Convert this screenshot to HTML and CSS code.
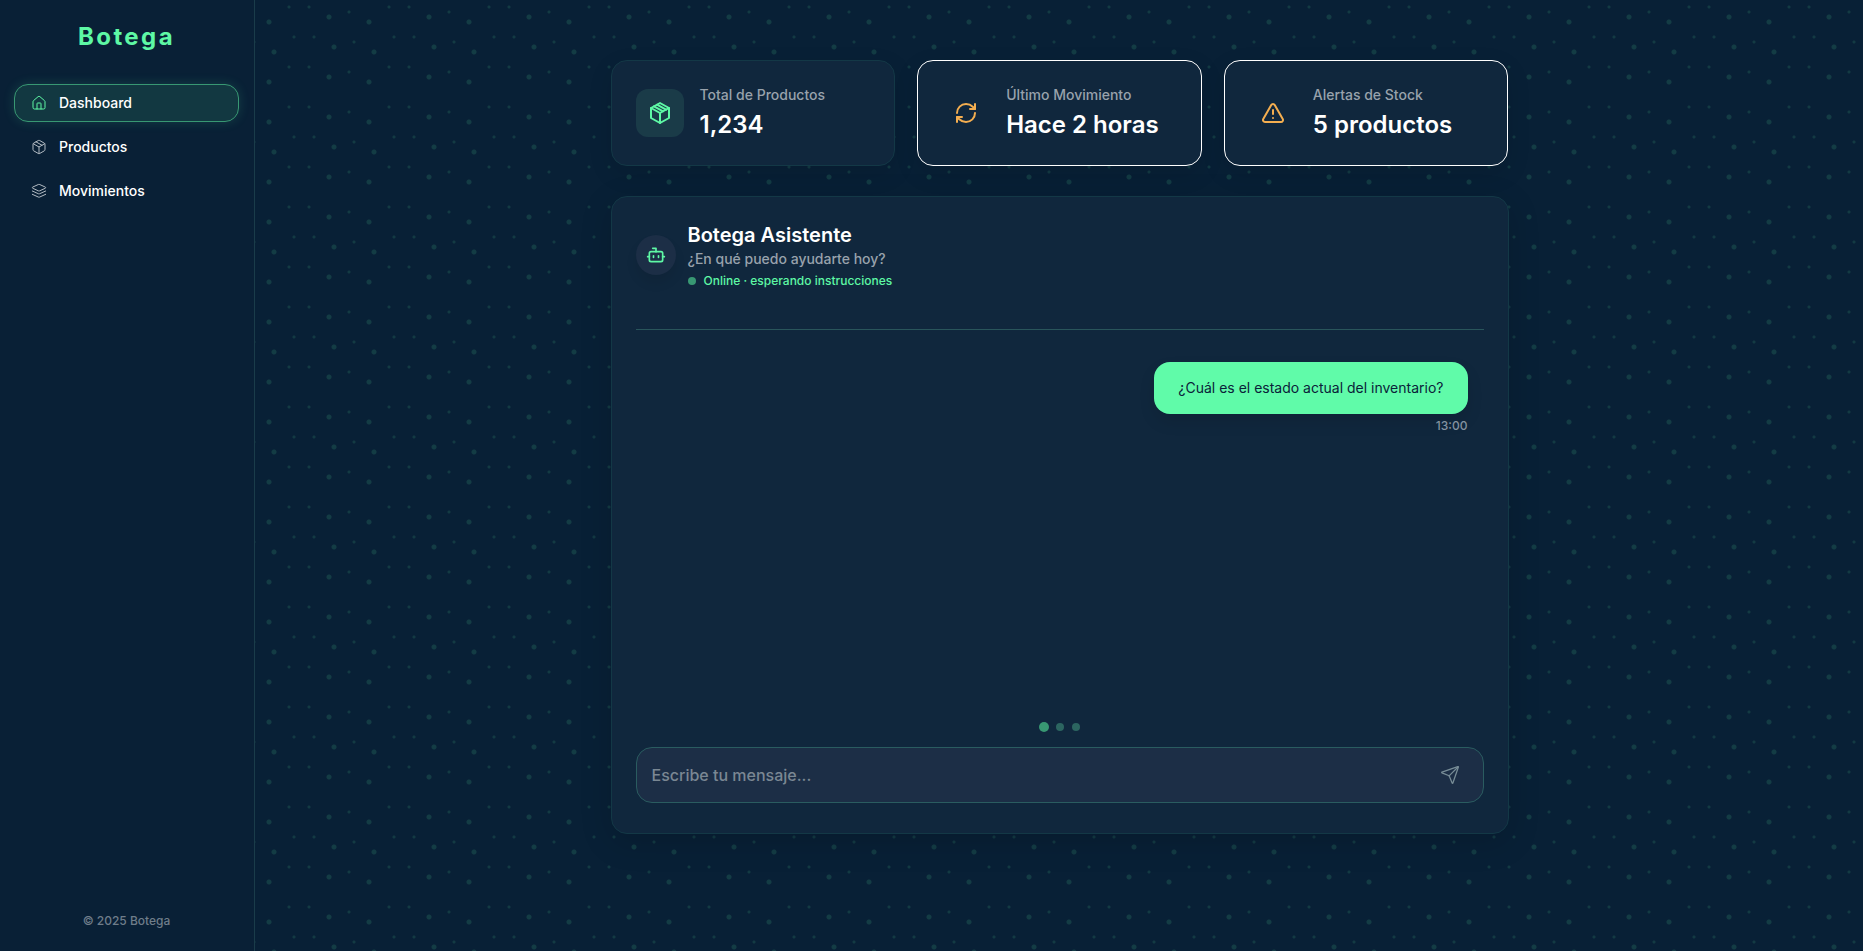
FILE: index.html
```html
<!DOCTYPE html>
<html lang="es">
<head>
  <meta charset="UTF-8" />
  <meta name="viewport" content="width=device-width, initial-scale=1.0" />
  <title>Botega - Dashboard</title>
  <link rel="stylesheet" href="styles.css">
</head>
<body>
  <aside class="sidebar">
    <h1 class="logo">Botega</h1>
    <nav class="nav">
      <a href="#dashboard" class="nav-link active" aria-current="page">
        <svg viewBox="0 0 24 24"><path d="M15 21v-8a1 1 0 0 0-1-1h-4a1 1 0 0 0-1 1v8"/><path d="M3 10a2 2 0 0 1 .709-1.528l7-5.999a2 2 0 0 1 2.582 0l7 5.999A2 2 0 0 1 21 10v9a2 2 0 0 1-2 2H5a2 2 0 0 1-2-2z"/></svg>
        Dashboard
      </a>
      <a href="#productos" class="nav-link">
        <svg viewBox="0 0 24 24"><path d="m7.5 4.27 9 5.15"/><path d="M21 8a2 2 0 0 0-1-1.73l-7-4a2 2 0 0 0-2 0l-7 4A2 2 0 0 0 3 8v8a2 2 0 0 0 1 1.73l7 4a2 2 0 0 0 2 0l7-4A2 2 0 0 0 21 16Z"/><path d="m3.3 7 8.7 5 8.7-5"/><path d="M12 22V12"/></svg>
        Productos
      </a>
      <a href="#movimientos" class="nav-link">
        <svg viewBox="0 0 24 24"><path d="m12.83 2.18a2 2 0 0 0-1.66 0L2.6 6.08a1 1 0 0 0 0 1.83l8.58 3.91a2 2 0 0 0 1.66 0l8.58-3.9a1 1 0 0 0 0-1.83Z"/><path d="m22 12-9.17 4.16a2 2 0 0 1-1.66 0L2 12"/><path d="m22 17-9.17 4.16a2 2 0 0 1-1.66 0L2 17"/></svg>
        Movimientos
      </a>
    </nav>
    <footer class="sidebar-footer">© 2025 Botega</footer>
  </aside>

  <main class="main">
    <div class="content">
      <section class="stats">
        <div class="stat-card">
          <div class="stat-icon green">
            <svg viewBox="0 0 24 24"><path d="M12 2 21 7v10l-9 5-9-5V7z"/><path d="m3 7 9 5 9-5"/><path d="M12 22V12"/><path d="m6 5.3 9 5"/><path d="m9 3.7 9 5"/></svg>
          </div>
          <div>
            <p class="stat-label">Total de Productos</p>
            <p class="stat-value">1,234</p>
          </div>
        </div>
        <div class="stat-card outlined">
          <div class="stat-icon orange">
            <svg viewBox="0 0 24 24"><path d="M3 12a9 9 0 0 1 9-9 9.75 9.75 0 0 1 6.74 2.74L21 8"/><path d="M21 3v5h-5"/><path d="M21 12a9 9 0 0 1-9 9 9.75 9.75 0 0 1-6.74-2.74L3 16"/><path d="M8 16H3v5"/></svg>
          </div>
          <div>
            <p class="stat-label">Último Movimiento</p>
            <p class="stat-value">Hace 2 horas</p>
          </div>
        </div>
        <div class="stat-card outlined">
          <div class="stat-icon orange">
            <svg viewBox="0 0 24 24"><path d="m21.73 18-8-14a2 2 0 0 0-3.48 0l-8 14A2 2 0 0 0 4 21h16a2 2 0 0 0 1.73-3"/><path d="M12 9v4"/><path d="M12 17h.01"/></svg>
          </div>
          <div>
            <p class="stat-label">Alertas de Stock</p>
            <p class="stat-value">5 productos</p>
          </div>
        </div>
      </section>

      <section class="chat">
        <header class="chat-header">
          <div class="avatar">
            <svg viewBox="0 0 24 24"><path d="M12 8V4H8"/><rect width="16" height="12" x="4" y="8" rx="2"/><path d="M2 14h2"/><path d="M20 14h2"/><path d="M15 13v2"/><path d="M9 13v2"/></svg>
          </div>
          <div>
            <h2 class="chat-title">Botega Asistente</h2>
            <p class="chat-subtitle">¿En qué puedo ayudarte hoy?</p>
            <p class="status"><span class="status-dot"></span>Online · esperando instrucciones</p>
          </div>
        </header>

        <div class="messages">
          <div class="message">
            <p class="bubble">¿Cuál es el estado actual del inventario?</p>
            <time class="time">13:00</time>
          </div>
        </div>

        <div class="typing">
          <span class="dot big"></span>
          <span class="dot"></span>
          <span class="dot"></span>
        </div>

        <form class="chat-form">
          <input type="text" class="chat-input" placeholder="Escribe tu mensaje..." aria-label="Mensaje" />
          <button type="submit" class="send-btn" aria-label="Enviar" disabled>
            <svg viewBox="0 0 24 24"><path d="M14.536 21.686a.5.5 0 0 0 .937-.024l6.5-19a.496.496 0 0 0-.635-.635l-19 6.5a.5.5 0 0 0-.024.937l7.93 3.18a2 2 0 0 1 1.112 1.11z"/><path d="m21.854 2.147-10.94 10.939"/></svg>
          </button>
        </form>
      </section>
    </div>
  </main>
</body>
</html>
```
FILE: styles.css
```css
* { box-sizing: border-box; margin: 0; padding: 0; }

body {
  --dot-lg: #5ef8a521 2px, transparent 3px;
  --dot-sm: #5ef8a51f 1px, transparent 2px;
  display: flex;
  min-height: 100vh;
  color: #fff;
  font-family: Inter, "Liberation Sans", sans-serif;
  font-size: 14px;
  font-weight: 500;
  line-height: 20px;
  background-color: #082036;
  background-image:
    radial-gradient(circle at 69px 22px, var(--dot-lg)),
    radial-gradient(circle at 29px 17px, var(--dot-lg)),
    radial-gradient(circle at 74px 52px, var(--dot-lg)),
    radial-gradient(circle at 34px 47px, var(--dot-lg)),
    radial-gradient(circle at 69px 82px, var(--dot-lg)),
    radial-gradient(circle at 29px 77px, var(--dot-lg)),
    radial-gradient(circle at 89px 7px, var(--dot-sm)),
    radial-gradient(circle at 9px 7px, var(--dot-sm)),
    radial-gradient(circle at 49px 12px, var(--dot-sm)),
    radial-gradient(circle at 94px 37px, var(--dot-sm)),
    radial-gradient(circle at 14px 37px, var(--dot-sm)),
    radial-gradient(circle at 54px 42px, var(--dot-sm)),
    radial-gradient(circle at 89px 67px, var(--dot-sm)),
    radial-gradient(circle at 9px 67px, var(--dot-sm)),
    radial-gradient(circle at 49px 72px, var(--dot-sm));
  background-size: 100px 100px;
}

svg { display: block; width: 24px; height: 24px; fill: none; stroke: currentColor; stroke-width: 2; stroke-linecap: round; stroke-linejoin: round; }

/* Sidebar */
.sidebar { display: flex; flex-direction: column; flex: none; width: 255px; padding: 21px 15px 20px 14px; background: #092036; border-right: 1px solid #1a3c4a; }
.logo { margin-bottom: 31px; color: #5ef8a5; font-size: 24px; font-weight: 700; line-height: 32px; letter-spacing: 0.1em; text-align: center; }
.nav { display: flex; flex-direction: column; gap: 6px; }
.nav-link { display: flex; align-items: center; gap: 12px; padding: 8px 16px; border: 1px solid transparent; border-radius: 14px; color: #fff; text-decoration: none; }
.nav-link svg { width: 16px; height: 16px; stroke-width: 1.5; color: #b4bcc4; }
.nav-link.active { background: #123841; border-color: #389873; box-shadow: 0 0 12px rgba(94,248,165,0.15); }
.nav-link.active svg { color: #5ef8a5; }
.sidebar-footer { margin-top: auto; color: #6f7d8a; font-size: 12px; text-align: center; }

/* Main */
.main { display: flex; justify-content: center; flex: 1; padding: 60px 23px 117px 24px; }
.content { display: flex; flex-direction: column; gap: 30px; width: 100%; max-width: 898px; }

.stats { display: grid; grid-template-columns: repeat(3, 1fr); gap: 22px; }
.stat-card { display: flex; align-items: center; gap: 16px; padding: 24px; background: #10273d; border: 1px solid #133846; border-radius: 16px; box-shadow: 0 8px 24px rgba(0,0,0,0.1); }
.stat-card.outlined { border-color: #fff; }
.stat-icon { display: flex; align-items: center; justify-content: center; width: 48px; height: 48px; border-radius: 12px; }
.stat-icon.green { background: #1a3b48; color: #5ef8a5; }
.stat-icon.orange { color: #f4ae50; }
.stat-label { margin-bottom: 4px; color: #98a2ac; }
.stat-value { font-size: 24px; font-weight: 600; line-height: 32px; }

/* Chat */
.chat { display: flex; flex-direction: column; flex: 1; padding: 24px 24px 30px; background: #10273d; border: 1px solid #133846; border-radius: 16px; box-shadow: 0 8px 32px rgba(0,0,0,0.15); }
.chat-header { display: flex; align-items: center; gap: 12px; padding-bottom: 40px; border-bottom: 1px solid #29555b; }
.avatar { display: flex; align-items: center; justify-content: center; width: 40px; height: 40px; border-radius: 50%; background: #1c2e46; color: #5ef8a5; box-shadow: 0 8px 12px rgba(0,0,0,0.08); }
.avatar svg { width: 20px; height: 20px; }
.chat-title { font-size: 20px; font-weight: 600; line-height: 28px; }
.chat-subtitle { color: #98a2ac; }
.status { display: flex; align-items: center; gap: 8px; margin-top: 4px; color: #5ef8a5; font-size: 12px; line-height: 16px; }
.status-dot { width: 8px; height: 8px; border-radius: 50%; background: #389873; }

.messages { flex: 1; padding: 32px 16px; }
.message { display: flex; flex-direction: column; align-items: flex-end; gap: 4px; }
.bubble { padding: 16px 24px; background: #60fba9; border-radius: 16px; color: #0a2239; font-weight: 400; box-shadow: 0 8px 16px rgba(0,0,0,0.1); }
.time { color: #8492a0; font-size: 12px; line-height: 16px; }

.typing { display: flex; align-items: center; justify-content: center; gap: 8px; height: 10px; margin-bottom: 15px; }
.dot { width: 8px; height: 8px; border-radius: 50%; background: #2c6560; }
.dot.big { background: #389873; transform: scale(1.25); }

.chat-form { display: flex; align-items: center; padding: 0 15px; background: #1c2e46; border: 1px solid #2a5c60; border-radius: 16px; }
.chat-input { flex: 1; height: 54px; background: none; border: none; outline: none; color: #fff; font: inherit; font-size: 16px; }
.chat-input::placeholder { color: #7a8793; }
.send-btn { padding: 8px; background: none; border: none; color: #788d97; }
.send-btn svg { width: 20px; height: 20px; stroke-width: 1.5; }
```
